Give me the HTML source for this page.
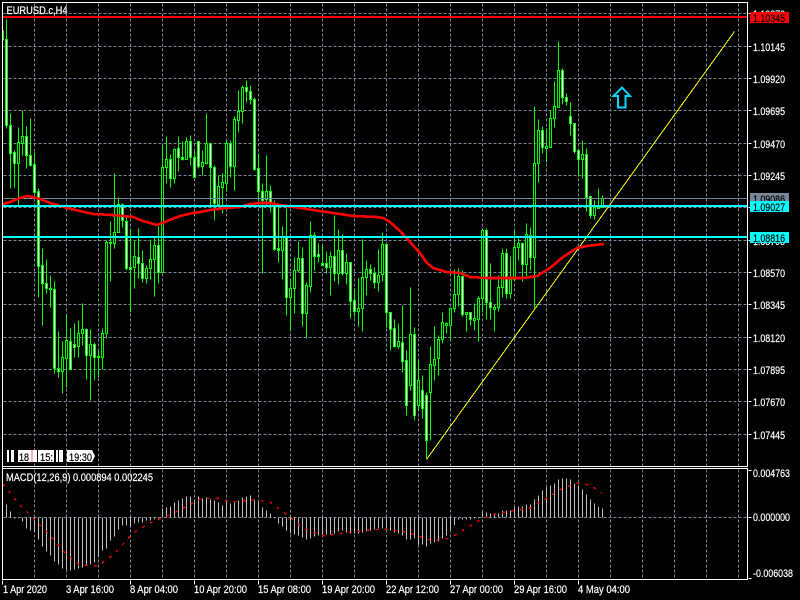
<!DOCTYPE html>
<html><head><meta charset="utf-8"><title>EURUSD.c,H4</title>
<style>
html,body{margin:0;padding:0;background:#000;width:800px;height:600px;overflow:hidden}
svg{display:block}
text{font-family:"Liberation Sans",sans-serif;font-size:11px;fill:#fff;stroke:#fff;stroke-width:.2}
text.k{fill:#000;stroke:#000}
</style></head><body>
<svg width="800" height="600" viewBox="0 0 800 600" xmlns="http://www.w3.org/2000/svg">
<rect width="800" height="600" fill="#000"/>
<g transform="translate(.5 .5)" shape-rendering="crispEdges" fill="none">
<path stroke="#778899" stroke-dasharray="3 2" d="M3 13H747M3 46H747M3 78H747M3 110H747M3 143H747M3 175H747M3 207H747M3 240H747M3 272H747M3 304H747M3 337H747M3 369H747M3 401H747M3 434H747M3 517H747
M34 3V466M66 3V466M98 3V466M130 3V466M162 3V466M194 3V466M226 3V466M258 3V466M290 3V466M322 3V466M354 3V466M386 3V466M418 3V466M450 3V466M482 3V466M514 3V466M546 3V466M578 3V466M610 3V466M642 3V466M674 3V466M706 3V466M738 3V466
M34 469V579M66 469V579M98 469V579M130 469V579M162 469V579M194 469V579M226 469V579M258 469V579M290 469V579M322 469V579M354 469V579M386 469V579M418 469V579M450 469V579M482 469V579M514 469V579M546 469V579M578 469V579M610 469V579M642 469V579M674 469V579M706 469V579M738 469V579"/>
<!-- wicks -->
<path stroke="#00ff00" d="M3 30V40M6 19V128M10 113V188M14 150V187M18 127V205M22 110V155M26 126V168M30 118V166M34 152V193M38 188V297M42 248V325M46 259V293M50 275V307M54 281V373M58 331V377M62 341V393M66 314V387M70 328V369M74 323V357M78 320V357M82 303V345M86 328V379M90 329V400M94 342V380M98 350V377M102 328V369M106 240V338M110 221V281M114 173V248M118 197V232M122 203V227M126 215V270M130 228V312M134 240V288M138 228V278M142 250V282M146 265V283M150 239V279M154 237V296M158 226V283M162 145V272M166 136V183M170 154V187M174 148V183M178 136V171M182 141V160M186 137V159M190 135V165M194 151V177M198 141V168M202 150V175M206 113V164M210 143V205M214 165V220M218 175V205M222 173V213M226 140V191M230 140V177M234 116V190M238 90V132M242 85V123M246 80V102M250 85V104M254 97V170M258 153V200M262 183V273M266 155V205M270 185V212M274 200V250M278 203V262M282 226V279M286 208V315M290 278V331M294 257V313M298 241V272M302 247V326M306 282V338M310 221V292M314 232V270M318 243V262M322 245V265M326 251V273M330 251V295M334 215V281M338 229V284M342 234V275M346 253V284M350 262V318M354 288V317M358 278V326M362 239V331M366 260V295M370 264V280M374 267V288M378 249V291M382 232V281M386 242V327M390 312V350M394 319V347M398 323V348M402 305V372M406 350V415M410 287V390M414 327V420M418 360V410M422 375V418M426 392V458M430 346V440M434 326V380M438 335V375M442 312V343M446 322V333M450 307V340M454 269V312M458 268V306M462 270V316M466 312V331M470 312V325M474 303V330M478 296V341M482 228V312M486 228V319M490 263V319M494 304V331M498 275V311M502 248V297M506 248V298M510 256V298M514 230V281M518 238V260M522 242V281M526 223V277M530 227V270M534 106V308M538 119V182M542 126V153M546 128V162M550 110V147M554 81V127M558 41V107M562 68V104M566 93V105M570 102V135M574 123V153M578 150V176M582 140V178M586 148V211M590 195V218M594 200V219M598 188V207M602 195V207"/>
<!-- white bodies -->
<path stroke="#00ff00" fill="#fff" d="M5 39h2v86h-2zM9 125h2v28h-2zM13 152h2v11h-2zM25 136h2v19h-2zM29 155h2v10h-2zM33 164h2v28h-2zM37 191h2v75h-2zM41 265h2v18h-2zM45 283h2v5h-2zM49 288h2v1h-2zM53 289h2v79h-2zM57 368h2v3h-2zM69 341h2v28h-2zM73 344h2v3h-2zM85 329h2v26h-2zM93 344h2v13h-2zM97 356h2v1h-2zM121 204h2v16h-2zM125 221h2v47h-2zM129 267h2v2h-2zM137 257h2v6h-2zM141 263h2v15h-2zM157 245h2v27h-2zM169 159h2v19h-2zM177 148h2v9h-2zM181 157h2v2h-2zM189 141h2v16h-2zM193 157h2v20h-2zM197 141h2v25h-2zM209 143h2v24h-2zM213 167h2v36h-2zM229 143h2v23h-2zM245 87h2v4h-2zM249 91h2v8h-2zM253 99h2v70h-2zM257 168h2v23h-2zM261 191h2v9h-2zM269 191h2v12h-2zM273 203h2v46h-2zM277 248h2v2h-2zM285 237h2v60h-2zM301 258h2v55h-2zM313 235h2v21h-2zM317 254h2v2h-2zM321 263h2v2h-2zM325 263h2v4h-2zM333 256h2v17h-2zM341 250h2v23h-2zM349 262h2v39h-2zM353 300h2v11h-2zM369 269h2v4h-2zM373 273h2v9h-2zM385 244h2v68h-2zM389 312h2v17h-2zM393 328h2v18h-2zM401 342h2v19h-2zM405 360h2v45h-2zM413 334h2v81h-2zM421 390h2v18h-2zM425 395h2v45h-2zM461 276h2v38h-2zM469 312h2v7h-2zM485 230h2v72h-2zM489 302h2v5h-2zM505 253h2v40h-2zM521 243h2v21h-2zM529 235h2v22h-2zM541 130h2v17h-2zM561 70h2v27h-2zM565 97h2v4h-2zM569 116h2v7h-2zM573 123h2v28h-2zM577 150h2v9h-2zM585 154h2v43h-2zM589 196h2v19h-2z"/>
<!-- hollow bodies -->
<path stroke="#00ff00" fill="#000" d="M17 142h2v21h-2zM21 136h2v7h-2zM61 357h2v14h-2zM65 340h2v18h-2zM77 333h2v13h-2zM81 329h2v4h-2zM89 344h2v11h-2zM101 333h2v24h-2zM105 242h2v91h-2zM109 242h2v1h-2zM113 232h2v11h-2zM117 204h2v28h-2zM133 256h2v11h-2zM145 268h2v10h-2zM149 259h2v9h-2zM153 245h2v14h-2zM161 167h2v105h-2zM165 159h2v8h-2zM173 149h2v29h-2zM185 141h2v18h-2zM201 162h2v4h-2zM205 143h2v20h-2zM217 186h2v18h-2zM221 182h2v5h-2zM225 143h2v40h-2zM233 119h2v47h-2zM237 111h2v9h-2zM241 87h2v24h-2zM265 191h2v8h-2zM281 237h2v13h-2zM289 288h2v9h-2zM293 270h2v18h-2zM297 258h2v12h-2zM305 285h2v28h-2zM309 235h2v51h-2zM329 256h2v11h-2zM337 250h2v23h-2zM345 262h2v11h-2zM357 308h2v3h-2zM361 277h2v31h-2zM365 269h2v8h-2zM377 275h2v7h-2zM381 244h2v30h-2zM397 341h2v5h-2zM409 334h2v51h-2zM417 380h2v25h-2zM429 364h2v28h-2zM433 359h2v6h-2zM437 339h2v19h-2zM441 322h2v17h-2zM445 323h2v2h-2zM449 308h2v17h-2zM453 294h2v14h-2zM457 276h2v18h-2zM465 312h2v2h-2zM473 318h2v2h-2zM477 298h2v21h-2zM481 230h2v68h-2zM493 307h2v2h-2zM497 287h2v20h-2zM501 253h2v34h-2zM509 279h2v14h-2zM513 247h2v32h-2zM517 243h2v4h-2zM525 234h2v30h-2zM533 163h2v94h-2zM537 130h2v33h-2zM545 146h2v2h-2zM549 118h2v29h-2zM553 106h2v12h-2zM557 70h2v37h-2zM581 154h2v5h-2zM593 207h2v8h-2zM597 207h2v1h-2zM601 198h2v9h-2z"/>
<!-- MACD histogram -->
<path stroke="#c0c0c0" d="M6 504V517M10 511V517M14 517V518M18 517V518M22 517V521M26 517V528M30 517V530M34 517V532M38 517V539M42 517V546M46 517V551M50 517V555M54 517V561M58 517V564M62 517V568M66 517V569M70 517V570M74 517V569M78 517V568M82 517V567M86 517V565M90 517V564M94 517V562M98 517V556M102 517V550M106 517V548M110 517V540M114 517V536M118 517V529M122 517V525M126 517V525M130 517V527M134 517V523M138 517V522M142 517V522M146 517V520M150 517V520M154 517V519M158 517V518M162 508V517M166 507V517M170 506V517M174 502V517M178 500V517M182 498V517M186 496V517M190 496V517M194 500V517M198 496V517M202 498V517M206 497V517M210 499V517M214 500V517M218 502V517M222 505V517M226 501V517M230 503V517M234 502V517M238 500V517M242 497V517M246 496V517M250 495V517M254 499V517M258 502V517M262 507V517M266 510V517M270 513V517M274 517V518M278 517V523M282 517V526M286 517V530M290 517V533M294 517V534M298 517V535M302 517V537M306 517V539M310 517V538M314 517V536M318 517V535M322 517V534M326 517V534M330 517V534M334 517V533M338 517V531M342 517V530M346 517V532M350 517V533M354 517V533M358 517V533M362 517V532M366 517V531M370 517V530M374 517V529M378 517V528M382 517V528M386 517V528M390 517V530M394 517V532M398 517V533M402 517V535M406 517V539M410 517V539M414 517V538M418 517V544M422 517V544M426 517V546M430 517V543M434 517V542M438 517V541M442 517V538M446 517V535M450 517V529M454 517V525M458 517V519M462 517V519M466 517V519M470 517V519M474 517V518M478 517V518M482 512V517M486 512V517M490 513V517M494 513V517M498 513V517M502 510V517M506 510V517M510 510V517M514 507V517M518 506V517M522 506V517M526 504V517M530 504V517M534 499V517M538 495V517M542 490V517M546 487V517M550 485V517M554 483V517M558 479V517M562 478V517M566 478V517M570 479V517M574 483V517M578 486V517M582 489V517M586 494V517M590 499V517M594 503V517M598 506V517M602 508V517"/>
<!-- frame -->
<path stroke="#fff" d="M2 2H747V466H2ZM2 468H747V579H2ZM2 2V579
M748 13h3M748 46h3M748 78h3M748 110h3M748 143h3M748 175h3M748 207h3M748 240h3M748 272h3M748 304h3M748 337h3M748 369h3M748 401h3M748 434h3M748 470h3M748 517h3M748 578h3
M2 580v4M130 580v4M194 580v4M258 580v4M322 580v4M386 580v4M450 580v4M514 580v4M578 580v4"/>
<path stroke="#778899" d="M3 198H747"/>
</g>
<!-- signal line -->
<polyline fill="none" stroke="#ff0000" stroke-width="1.3" stroke-dasharray="3 6" shape-rendering="crispEdges" points="3,484 18,503 33,518 47,532 67,555 80,565 98,566 113,555 133,533 150,523 163,518 180,510 200,499 217,498 230,502 253,500 270,502 290,517 303,528 323,536 350,532 383,529 407,532 433,541 450,538 467,528 483,518 500,513 530,508 547,498 563,488 578,483 590,485 602,493"/>
<!-- yellow trend -->
<line x1="426.5" y1="459.5" x2="734.5" y2="31.5" stroke="#ffff00" stroke-width="1" shape-rendering="crispEdges"/>
<!-- MA -->
<polyline fill="none" stroke="#ff0000" stroke-width="2.6" stroke-linejoin="round" shape-rendering="crispEdges" points="3,204 10,202 20,198 27,196 33,197 40,199 50,203 57,205 67,208 80,211 93,214 113,215 123,216 133,217 143,221 157,225 167,221 180,216 193,213 200,212 210,210 227,208 240,207 250,204 260,203 270,203 280,205 300,208 313,210 333,213 353,216 377,217 383,218 390,222 400,231 410,242 420,253 427,263 433,268 447,272 460,273 470,277 487,278 523,278 537,276 550,268 563,257 577,248 587,246 604,244"/>
<!-- hlines -->
<g shape-rendering="crispEdges">
<rect x="3" y="16" width="744" height="2" fill="#ff0000"/>
<rect x="3" y="205" width="744" height="2" fill="#00ffff"/>
<rect x="3" y="236" width="744" height="2" fill="#00ffff"/>
</g>
<!-- arrow -->
<path d="M622 87.5L630 96H625.5V107.5H618V96H613.5Z" fill="none" stroke="#00d8ff" stroke-width="2"/>
<!-- tags -->
<g shape-rendering="crispEdges" fill="#fff">
<rect x="7" y="450" width="2" height="12"/><rect x="11" y="450" width="3" height="12"/><rect x="18" y="450" width="13" height="12"/>
<rect x="31" y="450" width="2" height="12" fill="#ffb0b0"/><rect x="33" y="450" width="4" height="12"/><rect x="38" y="450" width="16" height="12"/>
<rect x="56" y="450" width="2" height="12"/><rect x="59" y="450" width="4" height="12"/>
</g>
<path d="M67 450H92L95 456L92 462H67Z" fill="#fff"/>
<text x="19" y="461" class="k" textLength="10" lengthAdjust="spacingAndGlyphs">18</text>
<text x="40" y="461" class="k" textLength="13" lengthAdjust="spacingAndGlyphs">15:</text>
<text x="69" y="461" class="k" textLength="23" lengthAdjust="spacingAndGlyphs">19:30</text>
<!-- titles -->
<text x="6.5" y="14" textLength="61" lengthAdjust="spacingAndGlyphs">EURUSD.c,H4</text>
<text x="6" y="481" textLength="147" lengthAdjust="spacingAndGlyphs">MACD(12,26,9) 0.000894 0.002245</text>
<!-- price axis -->
<g>
<text x="753" y="18" textLength="32" lengthAdjust="spacingAndGlyphs">1.10370</text>
<text x="753" y="51" textLength="32" lengthAdjust="spacingAndGlyphs">1.10145</text>
<text x="753" y="83" textLength="32" lengthAdjust="spacingAndGlyphs">1.09920</text>
<text x="753" y="115" textLength="32" lengthAdjust="spacingAndGlyphs">1.09695</text>
<text x="753" y="148" textLength="32" lengthAdjust="spacingAndGlyphs">1.09470</text>
<text x="753" y="180" textLength="32" lengthAdjust="spacingAndGlyphs">1.09245</text>
<text x="753" y="245" textLength="32" lengthAdjust="spacingAndGlyphs">1.08795</text>
<text x="753" y="277" textLength="32" lengthAdjust="spacingAndGlyphs">1.08570</text>
<text x="753" y="309" textLength="32" lengthAdjust="spacingAndGlyphs">1.08345</text>
<text x="753" y="342" textLength="32" lengthAdjust="spacingAndGlyphs">1.08120</text>
<text x="753" y="374" textLength="32" lengthAdjust="spacingAndGlyphs">1.07895</text>
<text x="753" y="406" textLength="32" lengthAdjust="spacingAndGlyphs">1.07670</text>
<text x="753" y="439" textLength="32" lengthAdjust="spacingAndGlyphs">1.07445</text>
<rect x="750" y="12" width="39" height="11" fill="#ff0000"/>
<text x="753" y="22" class="k" textLength="32" lengthAdjust="spacingAndGlyphs">1.10345</text>
<rect x="750" y="193" width="39" height="8" fill="#778899"/>
<text x="753" y="203" class="k" textLength="32" lengthAdjust="spacingAndGlyphs">1.09086</text>
<rect x="750" y="201" width="39" height="11" fill="#00ffff"/>
<text x="753" y="211" class="k" textLength="32" lengthAdjust="spacingAndGlyphs">1.09027</text>
<rect x="750" y="232" width="39" height="11" fill="#00ffff"/>
<text x="753" y="242" class="k" textLength="32" lengthAdjust="spacingAndGlyphs">1.08816</text>
<text x="753" y="477" textLength="37" lengthAdjust="spacingAndGlyphs">0.004763</text>
<text x="753" y="521" textLength="37" lengthAdjust="spacingAndGlyphs">0.000000</text>
<text x="753" y="577" textLength="40" lengthAdjust="spacingAndGlyphs">-0.006038</text>
</g>
<!-- time axis -->
<g>
<text x="3" y="593" textLength="44" lengthAdjust="spacingAndGlyphs">1 Apr 2020</text>
<text x="66" y="593" textLength="48" lengthAdjust="spacingAndGlyphs">3 Apr 16:00</text>
<text x="130" y="593" textLength="48" lengthAdjust="spacingAndGlyphs">8 Apr 04:00</text>
<text x="194" y="593" textLength="53" lengthAdjust="spacingAndGlyphs">10 Apr 20:00</text>
<text x="258" y="593" textLength="53" lengthAdjust="spacingAndGlyphs">15 Apr 08:00</text>
<text x="322" y="593" textLength="53" lengthAdjust="spacingAndGlyphs">19 Apr 20:00</text>
<text x="386" y="593" textLength="53" lengthAdjust="spacingAndGlyphs">22 Apr 12:00</text>
<text x="450" y="593" textLength="53" lengthAdjust="spacingAndGlyphs">27 Apr 00:00</text>
<text x="514" y="593" textLength="53" lengthAdjust="spacingAndGlyphs">29 Apr 16:00</text>
<text x="578" y="593" textLength="52" lengthAdjust="spacingAndGlyphs">4 May 04:00</text>
</g>
</svg>
</body></html>
